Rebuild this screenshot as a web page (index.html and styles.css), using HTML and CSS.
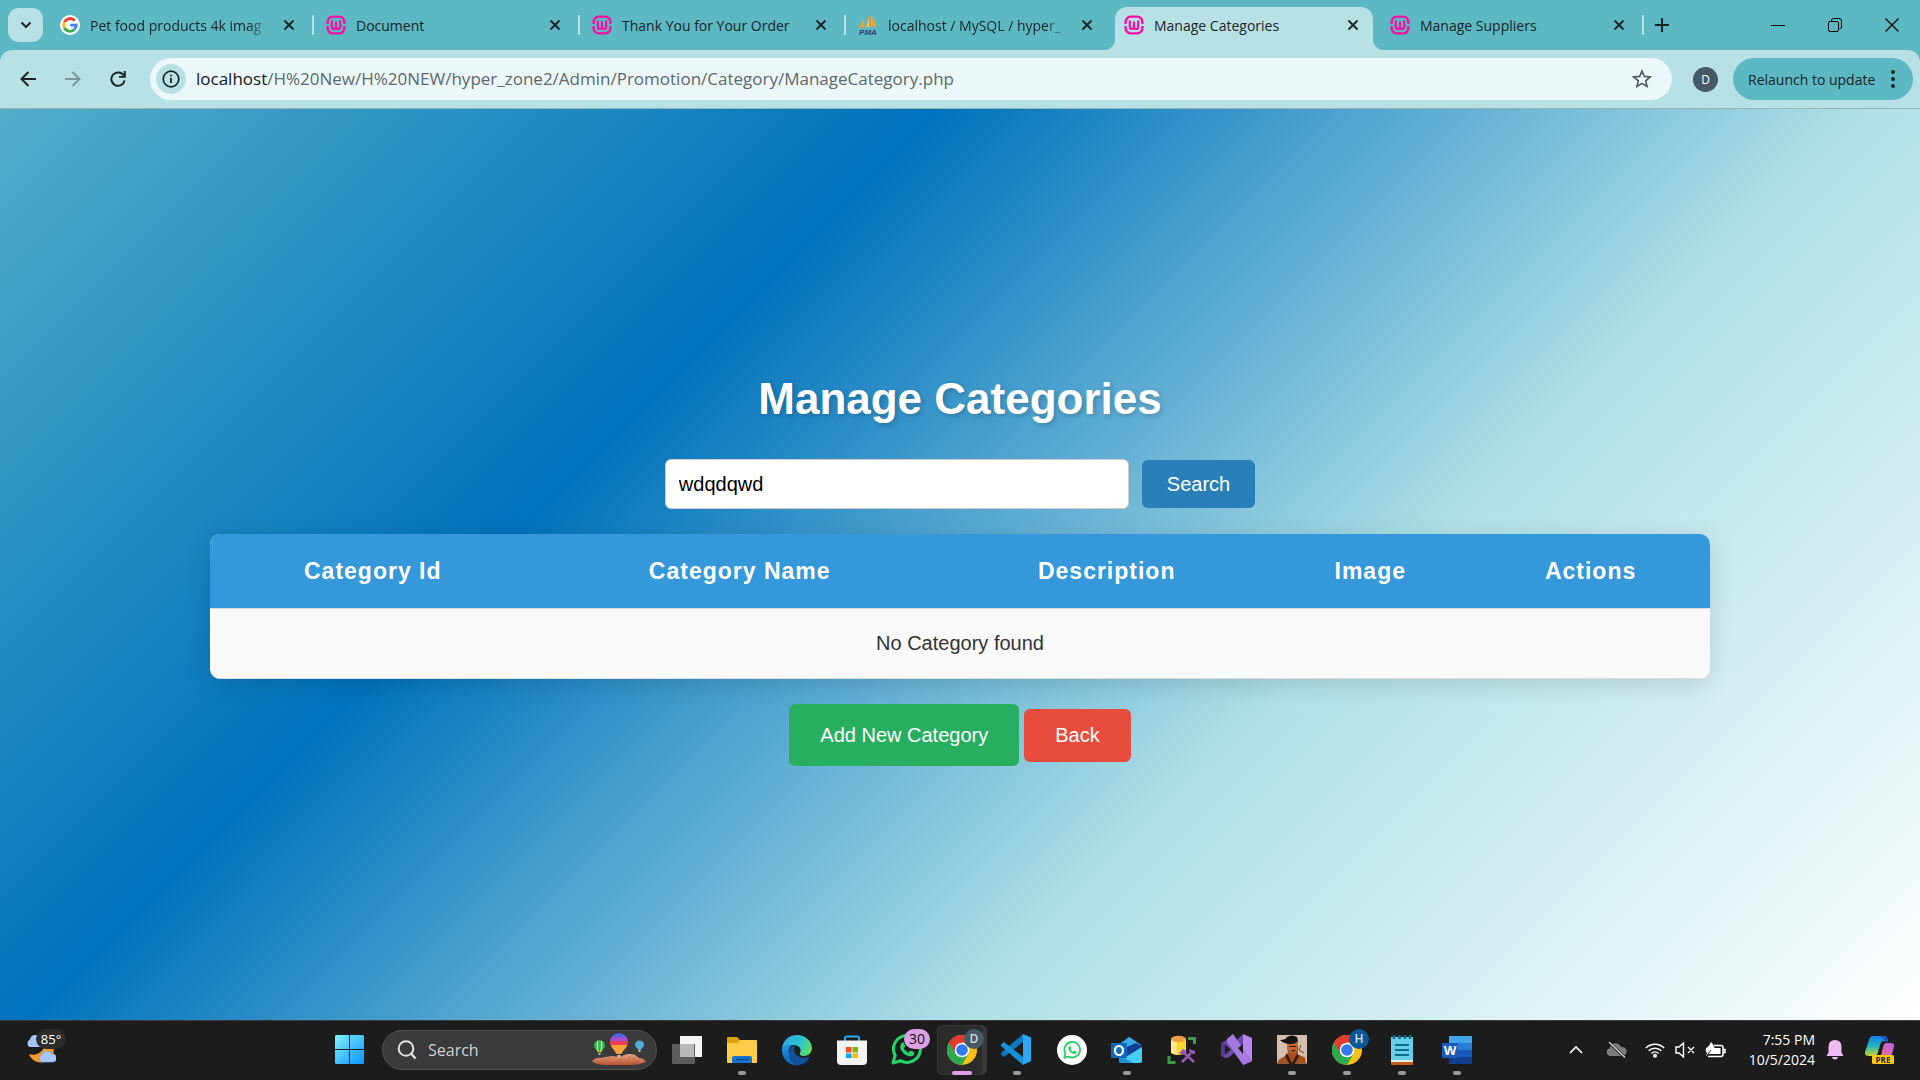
FILE: index.html
```
<!DOCTYPE html>
<html lang="en">
<head>
<meta charset="utf-8">
<title>Manage Categories</title>
<meta name="viewport" content="width=device-width, initial-scale=1">
<link rel="stylesheet" href="styles.css">
</head>
<body>
<svg class="defs" width="0" height="0" aria-hidden="true">
  <defs>
    <symbol id="wamp" viewBox="0 0 20 20"><g fill="none" stroke="#fa0fa6" stroke-width="2.400"><path d="M1.600 9V7A5.400 5.400 0 0 1 7 1.600h6A5.400 5.400 0 0 1 18.400 7v2M1.600 11V13A5.400 5.400 0 0 0 7 18.400h6a5.400 5.400 0 0 0 5.400-5.400V11"/><path stroke-width="2.200" d="M5.800 5.500v5.700q0 2.800 2.100 2.800t2.100-2.400V6.500v5.100q0 2.400 2.100 2.400t2.100-2.800V5.500"/></g></symbol>
    <symbol id="x" viewBox="0 0 12 12"><path d="M1.500 1.500l9 9M10.500 1.500l-9 9" fill="none" stroke="#1b2427" stroke-width="1.900"/></symbol>
    <symbol id="chrome" viewBox="0 0 30 30"><circle cx="15" cy="15" r="15" fill="#fbc116"/><path d="M2 7.500A15 15 0 0 0 15 30l6.500-11.300L15 15z" fill="#2da94f"/><path d="M2 7.500A15 15 0 0 1 28 7.500H15v7.500l-6.500 3.800z" fill="#e33b2e"/><circle cx="15" cy="15" r="7.300" fill="#fff"/><circle cx="15" cy="15" r="5.800" fill="#3079ee"/></symbol>
    <symbol id="phone" viewBox="0 0 30 30"><path d="M2 28l2-7.300A13 13 0 1 1 9.400 26z" fill="none" stroke="#25d366" stroke-width="3" stroke-linejoin="round"/><path d="M10.600 8.500c.8-.8 1.700-.5 2 .3l1 2.500c.2.500 0 1-.4 1.500l-.9 1.100c1 2 2.500 3.300 4.500 4.200l1.300-1.500c.4-.5.900-.5 1.400-.3l2.300 1.200c1.200.6.800 1.700.3 2.500-1 1.500-3 1.900-5 1.300-4.500-1.300-7.800-4.800-8.200-8.500-.2-1.700.6-3.200 1.700-4.300z" fill="#25d366"/></symbol>
  </defs>
</svg>

<header class="browser">
  <div class="tabstrip">
    <button class="tab-search" aria-label="Search tabs"><svg width="12" height="8" viewBox="0 0 12 8"><path d="M1.500 1.500L6 6l4.500-4.500" fill="none" stroke="#1b2427" stroke-width="2"/></svg></button>
    <nav class="tabs" aria-label="Open tabs">
      <div class="tab"><svg class="fav" viewBox="0 0 20 20"><circle cx="10" cy="10" r="10" fill="#fff"/><g fill="none" stroke-width="2.800"><path d="M14.800 5.600A6.300 6.300 0 0 0 4.400 7.100" stroke="#ea4335"/><path d="M4.400 7.100a6.300 6.300 0 0 0 0 5.800" stroke="#fbbc05"/><path d="M4.400 12.900a6.300 6.300 0 0 0 9.900 1.700" stroke="#34a853"/><path d="M14.300 14.600a6.300 6.300 0 0 0 2-4.400H10.200" stroke="#4285f4"/></g></svg><span class="tab-title faded">Pet food products 4k imag</span><button class="tab-close" aria-label="Close tab"><svg width="12" height="12"><use href="#x"/></svg></button></div>
      <div class="tab"><svg class="fav"><use href="#wamp"/></svg><span class="tab-title">Document</span><button class="tab-close" aria-label="Close tab"><svg width="12" height="12"><use href="#x"/></svg></button></div>
      <div class="tab"><svg class="fav"><use href="#wamp"/></svg><span class="tab-title">Thank You for Your Order</span><button class="tab-close" aria-label="Close tab"><svg width="12" height="12"><use href="#x"/></svg></button></div>
      <div class="tab before-active"><svg class="fav" viewBox="0 0 20 20"><path d="M6 3L1 13l5-.8zM11 0q-1 7-4 12.200l4-.8zM12.500 1q5 5 6 10.500l-6 .3z" fill="#f7a12c"/><path d="M11 0v11.500L8.500 12Q11 6 11 0z" fill="#fcc56c"/><text x="10" y="19.500" text-anchor="middle" class="pma">PMA</text></svg><span class="tab-title faded">localhost / MySQL / hyper_</span><button class="tab-close" aria-label="Close tab"><svg width="12" height="12"><use href="#x"/></svg></button></div>
      <div class="tab active"><svg class="fav"><use href="#wamp"/></svg><span class="tab-title">Manage Categories</span><button class="tab-close" aria-label="Close tab"><svg width="12" height="12"><use href="#x"/></svg></button></div>
      <div class="tab"><svg class="fav"><use href="#wamp"/></svg><span class="tab-title">Manage Suppliers</span><button class="tab-close" aria-label="Close tab"><svg width="12" height="12"><use href="#x"/></svg></button></div>
    </nav>
    <button class="new-tab" aria-label="New tab"><svg width="14" height="14" viewBox="0 0 14 14"><path d="M7 0v14M0 7h14" stroke="#1b2427" stroke-width="2"/></svg></button>
    <div class="window-controls">
      <button aria-label="Minimize"><svg width="14" height="14" viewBox="0 0 14 14"><path d="M0 7.500h14" stroke="#000"/></svg></button>
      <button aria-label="Restore"><svg width="14" height="14" viewBox="0 0 14 14"><path d="M3.500 3V2Q4 .5 5.500.5H11q2.500 0 2.500 2.500v6q0 1.500-2 2" fill="none" stroke="#000"/><rect x=".5" y="3.500" width="10" height="10" rx="1.500" fill="none" stroke="#000"/></svg></button>
      <button aria-label="Close"><svg width="14" height="14" viewBox="0 0 14 14"><path d="M.5.500l13 13M13.500.500l-13 13" stroke="#000" stroke-width="1.200"/></svg></button>
    </div>
  </div>
  <div class="toolbar">
    <div class="nav-buttons">
      <button aria-label="Back"><svg width="16" height="16" viewBox="0 0 16 16"><path d="M16 8H2M8.500 1L1.500 8l7 7" fill="none" stroke="#1b2427" stroke-width="2"/></svg></button>
      <button aria-label="Forward" disabled><svg width="16" height="16" viewBox="0 0 16 16"><path d="M0 8h14M7.500 1l7 7-7 7" fill="none" stroke="#7b979b" stroke-width="2"/></svg></button>
      <button aria-label="Reload"><svg width="16" height="16" viewBox="0 0 16 16"><path d="M13.700 4.500A6.700 6.700 0 1 0 14.600 9.500" fill="none" stroke="#1b2427" stroke-width="2"/><path d="M15.800 0v6.800H9V5h4.800V0z" fill="#1b2427"/></svg></button>
    </div>
    <div class="omnibox">
      <button class="site-info" aria-label="Site information"><svg width="18" height="18" viewBox="0 0 18 18"><circle cx="9" cy="9" r="7.800" fill="none" stroke="#1b2427" stroke-width="1.700"/><path d="M9 8v5M9 4.800v1.800" stroke="#1b2427" stroke-width="1.800"/></svg></button>
      <a class="url" href="#"><span class="host">localhost</span>/H%20New/H%20NEW/hyper_zone2/Admin/Promotion/Category/ManageCategory.php</a>
      <button class="star" aria-label="Bookmark this tab"><svg width="20" height="20" viewBox="0 0 20 20"><path d="M10 2l2.300 5.400 5.900.5-4.500 3.900 1.400 5.700L10 14.400l-5.100 3.100 1.400-5.700L1.800 7.900l5.900-.5z" fill="none" stroke="#4d5a5e" stroke-width="1.600"/></svg></button>
    </div>
    <button class="profile" aria-label="Profile">D</button>
    <button class="relaunch">Relaunch to update<svg width="4" height="18" viewBox="0 0 4 18"><g fill="#1b2427"><circle cx="2" cy="2" r="2"/><circle cx="2" cy="9" r="2"/><circle cx="2" cy="16" r="2"/></g></svg></button>
  </div>
</header>

<main class="page">
  <div class="container">
    <h1>Manage Categories</h1>
    <form class="search-form">
      <input type="text" class="search-input" value="wdqdqwd" aria-label="Search category">
      <button type="button" class="btn btn-search">Search</button>
    </form>
    <table class="categories">
      <thead><tr><th>Category Id</th><th>Category Name</th><th>Description</th><th>Image</th><th>Actions</th></tr></thead>
      <tbody><tr><td colspan="5">No Category found</td></tr></tbody>
    </table>
    <div class="actions">
      <a href="#" class="btn btn-add">Add New Category</a>
      <button type="button" class="btn btn-back">Back</button>
    </div>
  </div>
</main>

<footer class="taskbar">
  <button class="weather" aria-label="Weather">
    <svg width="30" height="29" viewBox="0 0 30 29"><path d="M26 9a12 12 0 0 1-6 17.500A12.500 12.500 0 0 1 3 19q9 3 15-6z" fill="#f59a23"/><path d="M4 12a4 4 0 0 1 0-7.500 5 5 0 0 1 9-2.500l4 10z" fill="#a9c6fa"/><path d="M16 27a4 4 0 0 1 0-7.500 5.500 5.500 0 0 1 10-.5 4 4 0 0 1 1 8z" fill="#a9c6fa" stroke="#7ea2ea" stroke-width=".7"/></svg>
    <span class="temp">85°</span>
  </button>
  <div class="apps">
    <button class="app start" aria-label="Start"><svg width="29" height="29" viewBox="0 0 29 29"><defs><linearGradient id="win" x1="0" y1="0" x2="1" y2="1"><stop offset="0" stop-color="#7ff3fd"/><stop offset="1" stop-color="#0a93ff"/></linearGradient></defs><path d="M1 0h13v14H0V1zM15 0h13l1 1v13H15zM0 15h14v14H1l-1-1zM15 15h14v13l-1 1H15z" fill="url(#win)"/></svg></button>
    <button class="task-search">
      <svg width="20" height="20" viewBox="0 0 20 20"><circle cx="9" cy="8.500" r="7.300" fill="none" stroke="#e4e4e4" stroke-width="2"/><path d="M14 13.500l4.500 5" stroke="#e4e4e4" stroke-width="2.300"/></svg>
      <span>Search</span>
      <svg class="balloons" width="54" height="33" viewBox="0 0 54 33"><defs><linearGradient id="rock" x1="0" y1="0" x2="0" y2="1"><stop offset="0" stop-color="#eaa688"/><stop offset="1" stop-color="#b4522f"/></linearGradient><clipPath id="env"><path d="M27 0a9 9 0 0 1 9 9c0 5-5 8-6.500 12h-5C23 17 18 14 18 9a9 9 0 0 1 9-9z"/></clipPath></defs><path d="M0 28q4-4 9-3l5-1 6-1 8 1 4-2q6-2 11 0l4 3q5 0 7 4-8 3-14 3H12Q2 31 0 28z" fill="url(#rock)"/><path d="M13 31l4-7M25 31l4-6M34 31l4-8M44 31l-2-7" stroke="#c26a48" stroke-width="1"/><g clip-path="url(#env)"><path fill="#4965df" d="M18 0h18v5H18z"/><path fill="#a44fd0" d="M18 4h18v4H18z"/><path fill="#ef3f54" d="M18 8h18v4H18z"/><path fill="#f5a53c" d="M18 12h18v9H18z"/></g><path d="M25.500 22h3v3h-3z" fill="#d8be8c"/><path d="M7.500 7a5.500 5.500 0 0 1 5.500 5.500c0 3-3 4.500-4 7H6c-1-2.500-4-4-4-7A5.500 5.500 0 0 1 7.500 7z" fill="#2fb55c"/><path d="M5.500 8v8l1 3M9.500 8v8l-1 3" stroke="#e4d95a" stroke-width="1.300" fill="none"/><path d="M6.500 20h2v2h-2zM46.500 17h2v2h-2z" fill="#ceb98c"/><path d="M47.500 7.500A4.500 4.500 0 0 1 52 12c0 2-2.500 3.500-3.500 5h-2C45.500 15.500 43 14 43 12a4.500 4.500 0 0 1 4.500-4.500z" fill="#4fadd8"/></svg>
    </button>
    <button class="app" aria-label="Task view"><svg width="30" height="30" viewBox="0 0 30 30"><path d="M8 1h22v21H8z" fill="#f4f4f4"/><rect y="9" width="23" height="20" rx="1" fill="#5d5d5d"/><path d="M8 9h14v13H8z" fill="#b9b9b9"/></svg></button>
    <button class="app running" aria-label="File Explorer"><svg width="30" height="30" viewBox="0 0 30 30"><path d="M0 3q0-1 1-1h9l3 3v5H0z" fill="#dda20c"/><path d="M0 8h10l3-3h16q1 0 1 1v21q0 1-1 1H1q-1 0-1-1z" fill="#fdcd48"/><path d="M5 28v-5q0-2 2-2h16q2 0 2 2v5z" fill="#1474cf"/><path d="M9 24.500h13" stroke="#0a4c93" stroke-width="1.400"/></svg></button>
    <button class="app" aria-label="Edge"><svg width="32" height="32" viewBox="0 0 32 32"><defs><linearGradient id="eg" x1="0" y1=".3" x2="1" y2=".6"><stop offset="0" stop-color="#2aa8e6"/><stop offset=".6" stop-color="#2fc6cf"/><stop offset="1" stop-color="#63dc54"/></linearGradient><linearGradient id="eb" x1="0" y1="0" x2="0" y2="1"><stop offset="0" stop-color="#1c9ae2"/><stop offset="1" stop-color="#0a61b8"/></linearGradient></defs><path d="M1 15C2 6 8 1 16 1s15 6 15 13c0 5-4 8-8 8-3 0-5-1-4-3 2-4-1-8-6-8C7 11 3 13 1 15z" fill="url(#eg)"/><path d="M1 15c2-4 6-5 10-4-3 2-4 5-3 10s5 9 11 10C9 33 0 25 1 15z" fill="url(#eb)"/><path d="M8 19c0-5 3-8 7-8-2 2-3 5-1 8 3 5 10 6 15 3-2 6-7 9-13 9-5-1-8-6-8-12z" fill="#10509b"/></svg></button>
    <button class="app" aria-label="Microsoft Store"><svg width="30" height="30" viewBox="0 0 30 30"><path d="M8 6V3q0-1.500 1.500-1.500h11Q22 1.500 22 3v3" fill="none" stroke="#27a8ea" stroke-width="2"/><path d="M0 5.500h30V26q0 4-4 4H4q-4 0-4-4z" fill="#f3f3f3"/><path d="M9 12h5.500v5.500H9z" fill="#f25022"/><path d="M15.500 12H21v5.500h-5.500z" fill="#7fba00"/><path d="M9 18.500h5.500V23H9z" fill="#00a4ef"/><path d="M15.500 18.500H21V23h-5.500z" fill="#ffb900"/></svg></button>
    <button class="app" aria-label="WhatsApp"><svg width="31" height="31"><use href="#phone"/></svg><span class="badge count">30</span></button>
    <button class="app running current" aria-label="Chrome"><svg width="30" height="30"><use href="#chrome"/></svg><span class="badge letter-d">D</span></button>
    <button class="app running" aria-label="Visual Studio Code"><svg width="31" height="31" viewBox="0 0 31 31"><path d="M22 8L3 23l-3-2.500V19L22 0z" fill="#0c77bd"/><path d="M22 23L3 8 0 10.500V12l22 19z" fill="#1590d9"/><path d="M22 0l8 3.500V27l-8 4z" fill="#2ea7f2"/></svg></button>
    <button class="app" aria-label="WhatsApp Web"><svg width="30" height="30" viewBox="0 0 30 30"><circle cx="15" cy="15" r="15" fill="#fff"/><svg x="6" y="6" width="18" height="18"><use href="#phone"/></svg></svg></button>
    <button class="app running" aria-label="Outlook"><svg width="31" height="30" viewBox="0 0 31 30"><path d="M5 11L18 2l12 8v5L16 24 5 20z" fill="#1b83d2"/><path d="M18 2l12 8-8 6-12-7z" fill="#38a9e8"/><path d="M9 15L25 8l6 3v3l-14 9z" fill="#123f91"/><path d="M31 12v14q0 2-2 2H10q-2 0-2-2z" fill="#48cdf5"/><path d="M8 20l14 8H10q-2 0-2-2z" fill="#2093dd"/><rect y="8" width="16" height="15" rx="1" fill="#1068bf"/><ellipse cx="8" cy="15.500" rx="4" ry="4.500" fill="none" stroke="#fff" stroke-width="2.200"/></svg></button>
    <button class="app" aria-label="SQL Server"><svg width="30" height="30" viewBox="0 0 30 30"><path d="M4 4v14q6 4 15 0V4z" fill="#ffd532"/><path d="M4 4v14l6 2V6z" fill="#ffe783"/><ellipse cx="11.500" cy="4" rx="7.500" ry="3.200" fill="#efa045"/><path d="M21 3.500h6.500V9M2 21v6.500h6.500" fill="none" stroke="#3f9a48" stroke-width="3"/><path d="M15 27l9-9M16 17l11 10" stroke="#9a59b5" stroke-width="2.500"/><path d="M12 18l4-4 4 2-4 4zM22 14q0 5 6 5v-3l-3-1z" fill="#9a59b5"/></svg></button>
    <button class="app" aria-label="Visual Studio"><svg width="31" height="31" viewBox="0 0 31 31"><path d="M0 9l4-2v17l-4-2z" fill="#55388e"/><path d="M4 7l6 4.500L22 0v10L8 23.500 4 24l-2-2 8-6.500L2 9z" fill="#6b49a8"/><path d="M22 0l9 4v23l-9 4z" fill="#ba86f0"/><path d="M7 4l5-4 19 27-9 4L5 7z" fill="#a578df"/><path d="M22 10v10l-5-6z" fill="#1c1c1c"/></svg></button>
    <button class="app running" aria-label="Game"><svg width="30" height="30" viewBox="0 0 30 30"><path fill="#d6bfae" d="M0 0h30v28.500H0z"/><path d="M0 28.500l2-4 9-5-1-9h11v9l7 3 1 6z" fill="#a5501e"/><path d="M10 7h11l-1 9-4 3-5-3z" fill="#c1652c"/><path d="M3 5q6 0 7-3 5-3 10 0l1 4q-2 3-8 3T3 5z" fill="#161212"/><path d="M10 18l5 10 5-9 2 2-5 9h-4l-5-9zM12 11h7v1h-7zM14 15h5l-3 2z" fill="#351c13"/><path d="M24 10l-2 5 5 3" stroke="#564638" fill="none"/></svg></button>
    <button class="app running" aria-label="Chrome, second profile"><svg width="30" height="30"><use href="#chrome"/></svg><span class="badge letter-h">H</span></button>
    <button class="app running" aria-label="Notepad"><svg width="24" height="30" viewBox="0 0 24 30"><path d="M1 24h22v6H1z" fill="#c25e1b"/><path d="M1 3h22v24H1z" fill="#e8eef0"/><path d="M1 2h22v23H1z" fill="#67cfe8"/><path d="M4 0v4M9.500 0v4M15 0v4M20 0v4" stroke="#0b6d90" stroke-width="2.400"/><path d="M5 10h14M5 15h14M5 20h14" stroke="#0b6d90" stroke-width="1.800"/></svg></button>
    <button class="app running" aria-label="Word"><svg width="30" height="28" viewBox="0 0 30 28"><path fill="#41a5ee" d="M7 0h23v8H7z"/><path fill="#2b7cd3" d="M7 7h23v7H7z"/><path fill="#185abd" d="M7 14h23v7H7z"/><path fill="#103f91" d="M7 21h23v7H7z"/><rect y="7" width="16" height="15" rx="1" fill="#195abf"/><text x="8" y="19" text-anchor="middle" class="word">W</text></svg></button>
  </div>
  <div class="tray">
    <button aria-label="Show hidden icons"><svg width="14" height="9" viewBox="0 0 14 9"><path d="M1 8l6-6 6 6" fill="none" stroke="#fff" stroke-width="1.700"/></svg></button>
    <button class="cloud" aria-label="OneDrive"><svg width="21" height="16" viewBox="0 0 21 16"><path d="M4.500 14a4 4 0 0 1-1-7.800A6 6 0 0 1 15 5a4.600 4.600 0 0 1 2 9z" fill="#7d7d7d"/><path d="M3 .5L19 15.500" stroke="#1c1c1c" stroke-width="3"/><path d="M3 0l16 15.500" stroke="#ddd" stroke-width="1.300"/></svg></button>
    <button class="quick" aria-label="Network, sound and battery">
      <svg width="20" height="16" viewBox="0 0 20 16"><g fill="none" stroke="#fff" stroke-width="1.500"><path d="M.8 6a13 13 0 0 1 18.400 0M3.700 8.800a9 9 0 0 1 12.600 0M6.500 11.500a5 5 0 0 1 7 0"/></g><circle cx="10" cy="13.700" r="2" fill="#fff"/></svg>
      <svg width="20" height="16" viewBox="0 0 20 16"><path d="M1 5h3l4.500-4v14L4 11H1zM13 5l6 6M19 5l-6 6" fill="none" stroke="#fff" stroke-width="1.400"/></svg>
      <svg width="21" height="18" viewBox="0 0 21 18"><path d="M9 4.500h7q2 0 2 2v7q0 2-2 2H3M18.500 8.500h1.500v3h-1.500" fill="none" stroke="#fff" stroke-width="1.500"/><path d="M8.500 7h7v6H6z" fill="#fff"/><path d="M1 7q3-1 5-6 4 4 3.500 8-1 4-6 4L1 15l1-3Q0 10 1 7z" fill="#fff"/><path d="M2 14l4-5" stroke="#1c1c1c"/></svg>
    </button>
    <button class="clock"><span>7:55 PM</span><span>10/5/2024</span></button>
    <button class="bell" aria-label="Notifications"><svg width="18" height="20" viewBox="0 0 18 20"><path d="M9 0q6.500 0 6.500 7v5.500L17.500 16H.5l2-3.500V7Q2.500 0 9 0zM6 17h6q-.5 2.500-3 2.500T6 17z" fill="#efbbf3"/></svg></button>
    <button class="copilot" aria-label="Copilot"><svg width="30" height="30" viewBox="0 0 30 30"><defs><linearGradient id="cp" x1="0" y1="0" x2="0" y2="1"><stop offset="0" stop-color="#1681e6"/><stop offset=".5" stop-color="#21b3c4"/><stop offset="1" stop-color="#c9d62a"/></linearGradient><linearGradient id="cq" x1="1" y1="0" x2="0" y2="1"><stop offset="0" stop-color="#b75cf0"/><stop offset="1" stop-color="#f6727c"/></linearGradient></defs><path d="M8 1h11q3 0 4 5h-4q-3 0-4 4l-2 7q-1 4-4 4H4q-5 0-4-4L4 5q1-4 4-4z" fill="url(#cp)"/><path d="M21 8h5q4 0 3 4l-3 10q-1 3-4 3h-7l3-13q1-4 3-4z" fill="url(#cq)"/><path d="M13 1h6q3 0 4 6h-3q-2-5-7-6z" fill="#1457c8"/><rect x="7" y="20" width="22" height="9" rx="1.500" fill="#ffc90c"/><text x="18" y="27.500" text-anchor="middle" class="pre">PRE</text></svg></button>
  </div>
</footer>
</body>
</html>
```
FILE: styles.css
```
:root {
  --strip: #5cb8c2;
  --toolbar: #b7e1e4;
  --ink: #1b2427;
  --ui: "Open Sans", "Noto Sans", sans-serif;
  --taskbar: #1c1c1c;
}

* { box-sizing: border-box; }

body {
  margin: 0;
  min-height: 100vh;
  display: flex;
  flex-direction: column;
  font-family: "Liberation Sans", Arial, sans-serif;
}

button { border: 0; padding: 0; background: none; font: inherit; color: inherit; }
svg { display: block; flex: none; }
.defs { position: absolute; }

/* Browser chrome */
.browser {
  background: var(--strip);
  color: var(--ink);
  font-family: var(--ui);
  font-size: 14px;
}

.tabstrip { display: flex; align-items: center; height: 50px; padding-left: 8px; }

.tab-search {
  width: 35px;
  height: 34px;
  flex: none;
  display: grid;
  place-items: center;
  border-radius: 11px;
  background: var(--toolbar);
}

.tabs { display: flex; align-self: stretch; min-width: 0; padding-left: 8px; }

.tab {
  position: relative;
  flex: 0 1 266px;
  width: 266px;
  min-width: 0;
  display: flex;
  align-items: center;
  padding: 0 22px 0 9px;
}

.tab::after {
  content: "";
  position: absolute;
  right: 3px;
  top: 15px;
  width: 2px;
  height: 20px;
  border-radius: 1px;
  background: var(--toolbar);
}

.tab.before-active::after { display: none; }

.tab.before-active::before {
  content: "";
  position: absolute;
  left: -5px;
  top: 15px;
  width: 2px;
  height: 20px;
  background: var(--toolbar);
}

.tab.active::after {
  left: -12px;
  right: -4px;
  top: auto;
  bottom: 0;
  width: auto;
  height: 12px;
  border-radius: 0;
  background:
    radial-gradient(circle at 0 0, transparent 12px, var(--toolbar) 13px) left / 12px 12px no-repeat,
    radial-gradient(circle at 100% 0, transparent 12px, var(--toolbar) 13px) right / 12px 12px no-repeat;
}

.tab.active::before {
  content: "";
  position: absolute;
  inset: 7px 8px 0 0;
  border-radius: 12px 12px 0 0;
  background: var(--toolbar);
}

.tab > * { position: relative; }
.fav { width: 20px; height: 20px; }

.tab-title {
  flex: 1;
  margin: 0 8px 0 10px;
  padding-top: 1px;
  white-space: nowrap;
  line-height: 24px;
}

.faded { mask-image: linear-gradient(to left, transparent 4px, #000 28px); }

.tab-close { width: 12px; height: 12px; }
.pma { font: italic bold 8px "Liberation Sans", sans-serif; fill: #35386f; }

.new-tab { width: 30px; height: 30px; display: grid; place-items: center; flex: none; }

.window-controls { margin-left: auto; display: flex; align-self: stretch; }
.window-controls button { width: 57px; display: grid; place-items: center; }

.toolbar {
  display: flex;
  align-items: center;
  height: 59px;
  padding: 0 7px 0 5px;
  border-radius: 12px 12px 0 0;
  border-bottom: 1px solid #98b3b5;
  background: var(--toolbar);
}

.nav-buttons { display: flex; }
.nav-buttons button { width: 45px; height: 40px; display: grid; place-items: center; }

.omnibox {
  flex: 1;
  min-width: 0;
  display: flex;
  align-items: center;
  height: 42px;
  margin-left: 10px;
  padding: 0 20px 0 6px;
  border-radius: 21px;
  background: #ebf7f8;
}

.site-info {
  width: 30px;
  height: 30px;
  flex: none;
  display: grid;
  place-items: center;
  border-radius: 50%;
  background: var(--toolbar);
}

.url {
  flex: 1;
  margin-left: 10px;
  overflow: hidden;
  white-space: nowrap;
  font-size: 17px;
  line-height: 26px;
  color: #5c696c;
  text-decoration: none;
}

.host { color: #15191a; }

.profile {
  width: 25px;
  height: 25px;
  margin: 0 15px 0 21px;
  border-radius: 50%;
  background: #455a64;
  color: #fff;
  font-size: 12px;
  line-height: 25px;
}

.relaunch {
  display: flex;
  align-items: center;
  justify-content: space-between;
  width: 180px;
  height: 42px;
  padding: 0 18px 0 15px;
  border-radius: 21px;
  background: var(--strip);
  white-space: nowrap;
}

/* Manage Categories page */
.page {
  flex: 1;
  display: flex;
  align-items: center;
  justify-content: center;
  padding: 11px 20px 0;
  background: linear-gradient(135deg, #52adc8 0%, #0072bc 33%, #b0e0e6 66%, #fff 100%);
}

.container { width: 100%; max-width: 1500px; }

h1 {
  margin: 0 0 35px;
  font-size: 44px;
  line-height: 50px;
  text-align: center;
  color: #fff;
  text-shadow: 2px 2px 5px rgba(0, 0, 0, 0.2);
}

.search-form {
  display: flex;
  align-items: center;
  justify-content: center;
  gap: 13px;
  margin-bottom: 25px;
}

.search-input {
  width: 464px;
  height: 50px;
  padding: 1px 13px 0;
  border: 1px solid #ccc;
  border-radius: 6px;
  background: #fff;
  color: #000;
  font: 20px "Liberation Sans", Arial, sans-serif;
}

.btn {
  border-radius: 6px;
  color: #fff;
  font-size: 20px;
  line-height: 24px;
  text-decoration: none;
}

.btn-search { padding: 12px 25px; background: #2980b9; }
.btn-add { padding: 19px 31px; background: #27ae60; }
.btn-back { padding: 14px 31px 15px; background: #e74c3c; }

.categories {
  width: 100%;
  border-collapse: collapse;
  border-radius: 10px;
  overflow: hidden;
  background: #f9f9f9;
  box-shadow: 0 5px 25px rgba(0, 0, 0, 0.13);
}

th {
  height: 75px;
  padding: 0 18px;
  background: #3498db;
  color: #fff;
  font-size: 23px;
  letter-spacing: 1px;
}

td {
  height: 70px;
  padding: 0;
  border-top: 1px solid #ddd;
  border-bottom: 1px solid #ddd;
  text-align: center;
  font-size: 20px;
  color: #333;
}

.actions {
  display: flex;
  align-items: center;
  justify-content: center;
  gap: 5px;
  margin-top: 25px;
}

/* Taskbar */
.taskbar {
  display: grid;
  grid-template-columns: 322px auto 1fr;
  height: 60px;
  padding-bottom: 2px;
  border-top: 1px solid #3a3a3a;
  background: var(--taskbar);
  color: #fff;
  font-family: var(--ui);
  font-size: 14px;
}

.weather { position: relative; width: 60px; padding-left: 26px; }

.temp {
  position: absolute;
  left: 36px;
  top: 8px;
  width: 30px;
  height: 20px;
  border-radius: 10px;
  background: #2d2d2d;
  font-size: 13px;
  line-height: 20px;
}

.apps { display: flex; align-items: center; }
.app { position: relative; width: 55px; height: 57px; display: grid; place-items: center; }

.task-search {
  display: flex;
  align-items: center;
  width: 275px;
  height: 40px;
  margin: 0 2px 0 5px;
  padding: 0 10px 0 14px;
  border: 1px solid #525252;
  border-radius: 20px;
  background: #3a3a3a;
  color: #d2d2d2;
  font-size: 16px;
}

.task-search span { margin-left: 11px; }
.balloons { margin-left: auto; }

.running::after {
  content: "";
  position: absolute;
  bottom: 3px;
  left: 50%;
  width: 8px;
  height: 4px;
  margin-left: -4px;
  border-radius: 2px;
  background: #9a9a9a;
}

.current::before {
  content: "";
  position: absolute;
  inset: 4px 2px 3px 3px;
  border: 1px solid #383838;
  border-right-width: 5px;
  border-radius: 6px;
  background: #2b2b2b;
}

.current::after { width: 20px; margin-left: -10px; background: #dd9fe5; }
.current svg { position: relative; }

.badge {
  position: absolute;
  top: 8px;
  left: 30px;
  width: 20px;
  height: 20px;
  border-radius: 10px;
  font-size: 12px;
  line-height: 20px;
}

.count { left: 25px; width: 26px; background: #dd9fe5; color: #111; font-size: 14px; }
.letter-d { background: #455a64; color: #d3dadd; font-weight: 600; }
.letter-h { background: #0a5797; color: #d3e2f0; font-weight: 600; }
.word { font: bold 13px "Open Sans", sans-serif; fill: #fff; }
.pre { font: bold 8px "Open Sans", sans-serif; fill: #222; }

.tray { display: flex; align-items: center; justify-content: flex-end; padding-right: 25px; }
.cloud { margin-left: 23px; }
.quick { display: flex; align-items: center; gap: 10px; margin-left: 18px; }

.clock {
  display: flex;
  flex-direction: column;
  align-items: flex-end;
  width: 89px;
  line-height: 20px;
}

.bell { margin-left: 11px; }
.copilot { margin-left: 21px; }
```
